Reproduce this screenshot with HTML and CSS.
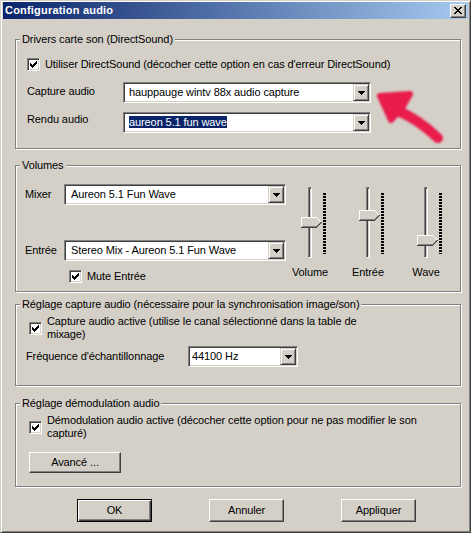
FILE: index.html
```html
<!DOCTYPE html>
<html lang="fr">
<head>
<meta charset="utf-8">
<title>Configuration audio</title>
<link rel="stylesheet" href="styles.css">
</head>
<body>
<div class="window">
  <div class="titlebar">
    <span class="title">Configuration audio</span>
    <span class="close-btn"><svg width="8" height="7" viewBox="0 0 8 7" shape-rendering="crispEdges"><path d="M0 0h2v1H0z M6 0h2v1H6z M1 1h2v1H1z M5 1h2v1H5z M2 2h4v1H2z M3 3h2v1H3z M2 4h4v1H2z M1 5h2v1H1z M5 5h2v1H5z M0 6h2v1H0z M6 6h2v1H6z" fill="#000"/></svg></span>
  </div>
  <div class="content">
    <section class="group group-drivers">
      <span class="legend">Drivers carte son (DirectSound)</span>
      <div class="check-row">
        <span class="checkbox"><svg width="7" height="7" viewBox="0 0 7 7" shape-rendering="crispEdges"><path d="M6 0h1v1H6z M5 1h2v1H5z M0 2h1v1H0z M4 2h3v1H4z M0 3h2v1H0z M3 3h3v1H3z M0 4h5v1H0z M1 5h3v1H1z M2 6h1v1H2z" fill="#000"/></svg></span>
        <span class="check-text">Utiliser DirectSound (décocher cette option en cas d'erreur DirectSound)</span>
      </div>
      <div class="field-row row-capture">
        <span class="field-label label-device label-capture">Capture audio</span>
        <div class="combo combo-device">
          <span class="combo-value">hauppauge wintv 88x audio capture</span>
          <span class="combo-btn"><svg width="7" height="4" viewBox="0 0 7 4" shape-rendering="crispEdges"><path d="M0 0h7v1H0z M1 1h5v1H1z M2 2h3v1H2z M3 3h1v1H3z" fill="#000"/></svg></span>
        </div>
      </div>
      <div class="field-row row-rendu">
        <span class="field-label label-device label-rendu">Rendu audio</span>
        <div class="combo combo-device">
          <span class="combo-value"><span class="selected">aureon 5.1 fun wave</span></span>
          <span class="combo-btn"><svg width="7" height="4" viewBox="0 0 7 4" shape-rendering="crispEdges"><path d="M0 0h7v1H0z M1 1h5v1H1z M2 2h3v1H2z M3 3h1v1H3z" fill="#000"/></svg></span>
        </div>
      </div>
    </section>

    <section class="group group-volumes">
      <span class="legend">Volumes</span>
      <div class="mixer-col">
        <div class="field-row row-mixer">
          <span class="field-label label-short">Mixer</span>
          <div class="combo combo-mixer">
            <span class="combo-value">Aureon 5.1 Fun Wave</span>
            <span class="combo-btn"><svg width="7" height="4" viewBox="0 0 7 4" shape-rendering="crispEdges"><path d="M0 0h7v1H0z M1 1h5v1H1z M2 2h3v1H2z M3 3h1v1H3z" fill="#000"/></svg></span>
          </div>
        </div>
        <div class="field-row row-entree">
          <span class="field-label label-short">Entrée</span>
          <div class="combo combo-mixer">
            <span class="combo-value">Stereo Mix - Aureon 5.1 Fun Wave</span>
            <span class="combo-btn"><svg width="7" height="4" viewBox="0 0 7 4" shape-rendering="crispEdges"><path d="M0 0h7v1H0z M1 1h5v1H1z M2 2h3v1H2z M3 3h1v1H3z" fill="#000"/></svg></span>
          </div>
        </div>
        <div class="check-row row-mute">
          <span class="checkbox"><svg width="7" height="7" viewBox="0 0 7 7" shape-rendering="crispEdges"><path d="M6 0h1v1H6z M5 1h2v1H5z M0 2h1v1H0z M4 2h3v1H4z M0 3h2v1H0z M3 3h3v1H3z M0 4h5v1H0z M1 5h3v1H1z M2 6h1v1H2z" fill="#000"/></svg></span>
          <span class="check-text">Mute Entrée</span>
        </div>
      </div>
      <div class="sliders">
        <div class="slider">
          <div class="trackbar">
            <span class="track"></span>
            <span class="ticks"></span>
            <svg class="thumb" style="top:31px" width="21" height="11" viewBox="0 0 21 11" shape-rendering="crispEdges"><path d="M0 0h16v11H0z M16 1h1v9h-1z M17 2h1v7h-1z M18 3h1v5h-1z M19 4h1v3h-1z M20 5h1v1h-1z" fill="#d4d0c8"/><path d="M0 0h16v1H0z M0 1h1v9H0z M16 1h1v1h-1z M17 2h1v1h-1z M18 3h1v1h-1z M19 4h1v1h-1z" fill="#fff"/><path d="M1 9h15v1H1z M16 8h1v1h-1z M17 7h1v1h-1z M18 6h1v1h-1z M19 5h1v1h-1z" fill="#808080"/><path d="M0 10h16v1H0z M16 9h1v1h-1z M17 8h1v1h-1z M18 7h1v1h-1z M19 6h1v1h-1z M20 5h1v1h-1z" fill="#404040"/></svg>
          </div>
          <span class="slider-label">Volume</span>
        </div>
        <div class="slider">
          <div class="trackbar">
            <span class="track"></span>
            <span class="ticks"></span>
            <svg class="thumb" style="top:24px" width="21" height="11" viewBox="0 0 21 11" shape-rendering="crispEdges"><path d="M0 0h16v11H0z M16 1h1v9h-1z M17 2h1v7h-1z M18 3h1v5h-1z M19 4h1v3h-1z M20 5h1v1h-1z" fill="#d4d0c8"/><path d="M0 0h16v1H0z M0 1h1v9H0z M16 1h1v1h-1z M17 2h1v1h-1z M18 3h1v1h-1z M19 4h1v1h-1z" fill="#fff"/><path d="M1 9h15v1H1z M16 8h1v1h-1z M17 7h1v1h-1z M18 6h1v1h-1z M19 5h1v1h-1z" fill="#808080"/><path d="M0 10h16v1H0z M16 9h1v1h-1z M17 8h1v1h-1z M18 7h1v1h-1z M19 6h1v1h-1z M20 5h1v1h-1z" fill="#404040"/></svg>
          </div>
          <span class="slider-label">Entrée</span>
        </div>
        <div class="slider">
          <div class="trackbar">
            <span class="track"></span>
            <span class="ticks"></span>
            <svg class="thumb" style="top:49px" width="21" height="11" viewBox="0 0 21 11" shape-rendering="crispEdges"><path d="M0 0h16v11H0z M16 1h1v9h-1z M17 2h1v7h-1z M18 3h1v5h-1z M19 4h1v3h-1z M20 5h1v1h-1z" fill="#d4d0c8"/><path d="M0 0h16v1H0z M0 1h1v9H0z M16 1h1v1h-1z M17 2h1v1h-1z M18 3h1v1h-1z M19 4h1v1h-1z" fill="#fff"/><path d="M1 9h15v1H1z M16 8h1v1h-1z M17 7h1v1h-1z M18 6h1v1h-1z M19 5h1v1h-1z" fill="#808080"/><path d="M0 10h16v1H0z M16 9h1v1h-1z M17 8h1v1h-1z M18 7h1v1h-1z M19 6h1v1h-1z M20 5h1v1h-1z" fill="#404040"/></svg>
          </div>
          <span class="slider-label">Wave</span>
        </div>
      </div>
    </section>

    <section class="group group-capture">
      <span class="legend">Réglage capture audio (nécessaire pour la synchronisation image/son)</span>
      <div class="check-row check-multi">
        <span class="checkbox"><svg width="7" height="7" viewBox="0 0 7 7" shape-rendering="crispEdges"><path d="M6 0h1v1H6z M5 1h2v1H5z M0 2h1v1H0z M4 2h3v1H4z M0 3h2v1H0z M3 3h3v1H3z M0 4h5v1H0z M1 5h3v1H1z M2 6h1v1H2z" fill="#000"/></svg></span>
        <span class="check-text">Capture audio active (utilise le canal sélectionné dans la table de<br>mixage)</span>
      </div>
      <div class="field-row row-freq">
        <span class="field-label label-freq">Fréquence d'échantillonnage</span>
        <div class="combo combo-freq">
          <span class="combo-value">44100 Hz</span>
          <span class="combo-btn"><svg width="7" height="4" viewBox="0 0 7 4" shape-rendering="crispEdges"><path d="M0 0h7v1H0z M1 1h5v1H1z M2 2h3v1H2z M3 3h1v1H3z" fill="#000"/></svg></span>
        </div>
      </div>
    </section>

    <section class="group group-demod">
      <span class="legend">Réglage démodulation audio</span>
      <div class="check-row check-multi">
        <span class="checkbox"><svg width="7" height="7" viewBox="0 0 7 7" shape-rendering="crispEdges"><path d="M6 0h1v1H6z M5 1h2v1H5z M0 2h1v1H0z M4 2h3v1H4z M0 3h2v1H0z M3 3h3v1H3z M0 4h5v1H0z M1 5h3v1H1z M2 6h1v1H2z" fill="#000"/></svg></span>
        <span class="check-text demod-text">Démodulation audio active (décocher cette option pour ne pas modifier le son<br>capturé)</span>
      </div>
      <button class="btn btn-advanced" type="button">Avancé ...</button>
    </section>

    <div class="dialog-buttons">
      <button class="btn btn-default" type="button">OK</button>
      <button class="btn" type="button">Annuler</button>
      <button class="btn" type="button">Appliquer</button>
    </div>
  </div>
</div>

<svg class="annotation" width="471" height="533" viewBox="0 0 471 533" aria-hidden="true">
  <defs><filter id="soft" x="-20%" y="-20%" width="140%" height="140%"><feGaussianBlur stdDeviation="0.9"/></filter></defs>
  <g filter="url(#soft)" fill="#e91a4b" stroke="#e91a4b" stroke-linejoin="round" stroke-linecap="round">
    <path d="M380 96 L410 94 L402 108 L391 120 Z" stroke-width="6"/>
    <path d="M396 110 Q418 119 438 138" fill="none" stroke-width="10"/>
  </g>
</svg>
</body>
</html>
```

FILE: styles.css
```css
* {
  box-sizing: border-box;
  margin: 0;
  padding: 0;
}

html, body {
  width: 471px;
  height: 533px;
  overflow: hidden;
}

body {
  position: relative;
  background: #d4d0c8;
  font-family: "Liberation Sans", Arial, sans-serif;
  font-size: 11px;
  line-height: 13px;
  letter-spacing: -0.1px;
  color: #000;
}

.window {
  width: 471px;
  height: 533px;
  border: 1px solid;
  border-color: #d4d0c8 #404040 #404040 #d4d0c8;
  padding: 1px 2px 2px 2px;
  box-shadow: inset 1px 1px #fff, inset -1px -1px #808080;
  display: flex;
  flex-direction: column;
}

/* Title bar */
.titlebar {
  height: 17px;
  flex: none;
  background: linear-gradient(to right, #0a246a, #a6caf0);
  display: flex;
  align-items: center;
  justify-content: space-between;
  padding: 0 2px 0 2px;
}

.title {
  color: #fff;
  font-weight: bold;
  letter-spacing: 0.2px;
}

.close-btn {
  width: 16px;
  height: 14px;
  background: #d4d0c8;
  border: 1px solid;
  border-color: #fff #404040 #404040 #fff;
  box-shadow: inset -1px -1px #808080;
  display: flex;
  align-items: center;
  justify-content: center;
}

.close-btn svg { display: block; }

/* Content */
.content {
  padding: 0 7px 0 12px;
  display: flex;
  flex-direction: column;
}

.group {
  position: relative;
  border: 1px solid #808080;
  box-shadow: inset 1px 1px #fff, 1px 1px #fff;
}

.legend {
  position: absolute;
  top: -7px;
  left: 4px;
  padding: 0 2px;
  background: #d4d0c8;
  white-space: nowrap;
}

.group-drivers {
  margin-top: 20px;
  height: 110px;
  padding: 18px 0 0 11px;
}

.group-volumes {
  margin-top: 16px;
  height: 127px;
  padding: 18px 0 0 9px;
  display: flex;
}

.group-capture {
  margin-top: 12px;
  height: 82px;
  padding: 10px 0 0 10px;
}

.group-demod {
  margin-top: 17px;
  height: 84px;
  padding: 10px 0 0 10px;
}

/* Checkboxes */
.check-row {
  display: flex;
  align-items: center;
  gap: 5px;
}

.checkbox {
  flex: none;
  width: 13px;
  height: 13px;
  background: #fff;
  border: 1px solid;
  border-color: #808080 #fff #fff #808080;
  box-shadow: inset 1px 1px #404040, inset -1px -1px #d4d0c8;
  display: flex;
  align-items: center;
  justify-content: center;
}

.checkbox svg { display: block; }

.check-text { white-space: nowrap; }

.check-multi { margin-left: 3px; }

.demod-text {
  width: 416px;
  background: #d4d0c8;
  position: relative;
}

/* Field rows */
.field-row {
  display: flex;
  align-items: center;
}

.row-capture { margin-top: 11px; align-items: flex-start; }
.row-rendu { margin-top: 9px; align-items: flex-start; }

.label-device { width: 96px; flex: none; }
.label-capture { margin-top: 3px; }
.label-rendu { margin-top: 1px; }

.label-short { width: 39px; flex: none; }

.row-freq { margin-top: 5px; }
.label-freq { width: 162px; flex: none; }

/* Combo boxes */
.combo {
  height: 21px;
  flex: none;
  background: #fff;
  border: 1px solid;
  border-color: #808080 #fff #fff #808080;
  box-shadow: inset 1px 1px #404040, inset -1px -1px #d4d0c8;
  padding: 1px;
  display: flex;
  align-items: center;
}

.combo-value {
  flex: 1;
  white-space: nowrap;
  overflow: hidden;
  padding-left: 4px;
}

.combo-device { width: 248px; }
.combo-mixer { width: 222px; }
.combo-mixer .combo-value { padding-left: 5px; }
.combo-freq { width: 110px; }
.combo-freq .combo-value { padding-left: 2px; }

.selected {
  background: #0a246a;
  color: #fff;
}

.combo-btn {
  flex: none;
  width: 16px;
  height: 17px;
  background: #d4d0c8;
  border: 1px solid;
  border-color: #d4d0c8 #404040 #404040 #d4d0c8;
  box-shadow: inset 1px 1px #fff, inset -1px -1px #808080;
  display: flex;
  align-items: center;
  justify-content: center;
}

.combo-btn svg { display: block; }

/* Volumes */
.mixer-col {
  width: 261px;
  flex: none;
  display: flex;
  flex-direction: column;
}

.row-entree { margin-top: 35px; }
.row-mute { margin-top: 9px; padding-left: 44px; }

.sliders {
  margin-left: 7px;
  margin-top: 2px;
  display: flex;
  gap: 24px;
}

.slider {
  width: 34px;
  display: flex;
  flex-direction: column;
  align-items: center;
}

.trackbar {
  position: relative;
  width: 34px;
  height: 72px;
}

.track {
  position: absolute;
  left: 15px;
  top: 1px;
  width: 4px;
  height: 71px;
  border: 1px solid;
  border-color: #808080 #fff #fff #808080;
  box-shadow: inset 1px 1px #404040, inset -1px -1px #d4d0c8;
}

.ticks {
  position: absolute;
  left: 30px;
  top: 7px;
  width: 3px;
  height: 61px;
  background: repeating-linear-gradient(to bottom, #000 0 2px, transparent 2px 3px);
}

.thumb {
  position: absolute;
  left: 8px;
  display: block;
}

.slider-label {
  margin-top: 8px;
  white-space: nowrap;
}

/* Buttons */
.btn {
  font-family: inherit;
  font-size: 11px;
  line-height: 13px;
  letter-spacing: -0.1px;
  color: #000;
  width: 75px;
  height: 23px;
  background: #d4d0c8;
  border: 1px solid;
  border-color: #fff #404040 #404040 #fff;
  box-shadow: inset -1px -1px #808080;
  display: flex;
  align-items: center;
  justify-content: center;
}

.btn-default {
  border-color: #000;
  box-shadow: inset 1px 1px #fff, inset -1px -1px #404040, inset -2px -2px #808080;
}

.btn-advanced {
  width: 92px;
  height: 21px;
  margin-top: 12px;
  margin-left: 3px;
}

.dialog-buttons {
  margin-top: 12px;
  padding-left: 62px;
  display: flex;
  gap: 57px;
}

/* Hand-drawn annotation */
.annotation {
  position: absolute;
  left: 0;
  top: 0;
  pointer-events: none;
}
```
